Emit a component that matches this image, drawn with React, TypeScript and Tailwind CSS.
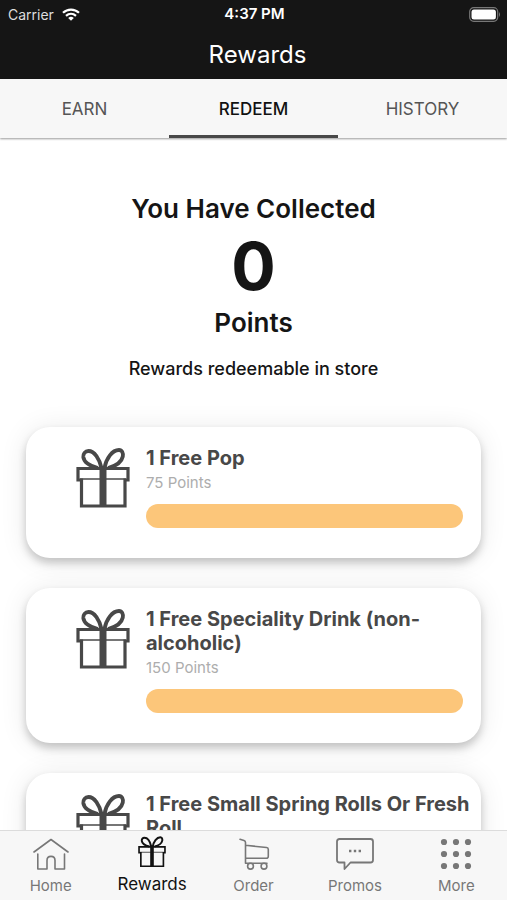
import type { ReactNode } from "react";

type IconProps = { className?: string };

function GiftIcon({ className }: IconProps) {
  return (
    <svg viewBox="0 0 54 61" className={className} fill="none" stroke="currentColor" aria-hidden="true">
      <path
        strokeWidth="3.8"
        d="M25.500 20C23.500 11 18.500 3 12.500 3C9 3 7 6 7.300 9C8 14.500 14 18 22 20M28.500 20C30 11 36 2 43 2C46 2 47.400 5 46.800 8.500C45.500 14.500 40 18 32 20"
      />
      <path strokeWidth="3.2" d="M2 31V20.500H52V32H49V58H5.500V32H2Z" />
      <path strokeWidth="1.400" d="M4 31H50" />
      <path strokeWidth="7" d="M27 18V59" />
    </svg>
  );
}

function HomeIcon({ className }: IconProps) {
  return (
    <svg viewBox="0 0 36 32" className={className} fill="none" stroke="currentColor" strokeWidth="1.600" strokeLinecap="round" strokeLinejoin="round" aria-hidden="true">
      <path d="M1 14L18 1.500L35 14M4.800 16V31H14V22.500C14 17 22 17 22 22.500V31H31.500V16" />
    </svg>
  );
}

function CartIcon({ className }: IconProps) {
  return (
    <svg viewBox="0 0 32 32" className={className} fill="none" stroke="currentColor" strokeWidth="1.600" strokeLinecap="round" strokeLinejoin="round" aria-hidden="true">
      <path d="M2 1.200L6 2.500Q7.500 3 7.500 4.500V25.200H29M7.500 7.300L28.500 9.500Q30.300 9.700 30.300 11.500V18.200Q30.300 20.200 28.300 20.200H7.500" />
      <circle cx="12.500" cy="28.200" r="2.900" />
      <circle cx="26" cy="28.200" r="2.900" />
    </svg>
  );
}

function ChatIcon({ className }: IconProps) {
  return (
    <svg viewBox="0 0 38 32" className={className} fill="none" stroke="currentColor" strokeWidth="1.800" strokeLinejoin="round" aria-hidden="true">
      <path d="M3.500 1H34.500Q37 1 37 3.500V22Q37 24.500 34.500 24.500H14.500L8.500 31V24.500H3.500Q1 24.500 1 22V3.500Q1 1 3.500 1Z" />
      <path strokeWidth="2.400" d="M13 13H15.400M17.800 13H20.200M22.600 13H25" />
    </svg>
  );
}

function GridIcon({ className }: IconProps) {
  return (
    <svg viewBox="0 0 32 32" className={className} fill="currentColor" aria-hidden="true">
      {[4, 16, 28].map((y) => [4, 16, 28].map((x) => <circle key={`${x}-${y}`} cx={x} cy={y} r="3.100" />))}
    </svg>
  );
}

function WifiIcon({ className }: IconProps) {
  return (
    <svg viewBox="0 0 18 13" className={className} fill="none" stroke="currentColor" strokeWidth="2.200" aria-hidden="true">
      <path d="M1 4.800C5.500 0.500 12.500 0.500 17 4.800M4 7.900C7 5.200 11 5.200 14 7.900" />
      <path fill="currentColor" stroke="none" d="M9 12.800L6.200 10Q9 7.700 11.800 10Z" />
    </svg>
  );
}

function BatteryIcon({ className }: IconProps) {
  return (
    <svg viewBox="0 0 32 15" className={className} fill="none" aria-hidden="true">
      <rect x="0.700" y="0.700" width="28" height="13.600" rx="4" stroke="#777" strokeWidth="1.200" />
      <rect x="2.500" y="2.500" width="24.400" height="10" rx="2.500" fill="#fff" />
      <path d="M30 5Q32 7.500 30 10Z" fill="#777" />
    </svg>
  );
}

function Tab({ label, active = false }: { label: string; active?: boolean }) {
  return (
    <button
      type="button"
      role="tab"
      aria-selected={active}
      className={`flex-1 border-b-[3px] pt-1.5 text-[17px] ${active ? "border-[#484848] font-medium text-[#111]" : "border-transparent text-[#555]"}`}
    >
      {label}
    </button>
  );
}

function RewardCard({ title, points }: { title: string; points: number }) {
  return (
    <li className="flex rounded-3xl bg-white pt-[19px] pr-1.5 pb-[30px] pl-[50px] shadow-[0_5px_8px_rgba(0,0,0,0.2),0_2px_28px_rgba(0,0,0,0.09)]">
      <GiftIcon className="mt-0.5 mr-4 h-[61px] w-[54px] shrink-0 text-[#484848]" />
      <div className="min-w-0 flex-1">
        <h2 className="text-xl leading-6 font-bold text-[#484848]">{title}</h2>
        <p className="text-[15px] leading-[26px] text-[#adadad]">{points} Points</p>
        <div className="mt-2 mr-3 h-6 rounded-full bg-[#fcc67a]" />
      </div>
    </li>
  );
}

function NavItem({ label, active = false, children }: { label: string; active?: boolean; children: ReactNode }) {
  return (
    <a
      href="#"
      aria-current={active ? "page" : undefined}
      className={`flex flex-1 flex-col items-center ${active ? "pt-[5px] text-[#111]" : "pt-[7px] text-[#777]"}`}
    >
      <span className="flex h-8 items-center">{children}</span>
      <span className={active ? "mt-1.5 text-[17px] leading-5" : "mt-1.5 text-[15px] leading-5"}>{label}</span>
    </a>
  );
}

const rewards = [
  { title: "1 Free Pop", points: 75 },
  { title: "1 Free Speciality Drink (non-alcoholic)", points: 150 },
  { title: "1 Free Small Spring Rolls Or Fresh Roll", points: 300 },
];

export default function App() {
  return (
    <div className="flex h-screen flex-col overflow-hidden bg-white font-[Inter,sans-serif]">
      <header className="shrink-0 bg-[#151515] pr-1.5 pl-2 text-white">
        <div className="grid h-7 grid-cols-3 items-center text-[14px]">
          <span className="flex items-center gap-2 text-[#ddd]">
            Carrier
            <WifiIcon className="h-[13px] w-[18px] text-white" />
          </span>
          <span className="text-center text-[15px] font-semibold">4:37 PM</span>
          <BatteryIcon className="h-[15px] w-8 justify-self-end" />
        </div>
        <h1 className="h-[51px] pt-3 pl-1.5 text-center text-[24px] leading-[30px]">Rewards</h1>
      </header>

      <div role="tablist" className="z-10 flex h-[59px] shrink-0 bg-[#f7f7f7] shadow-[0_1px_2px_rgba(0,0,0,0.4)]">
        <Tab label="EARN" />
        <Tab label="REDEEM" active />
        <Tab label="HISTORY" />
      </div>

      <main className="min-h-0 flex-1 overflow-hidden">
        <section className="flex flex-col items-center pt-[54px] text-center text-[#151515]">
          <p className="text-[26px] leading-[34px] font-semibold">You Have Collected</p>
          <p className="text-[66px] leading-[80px] font-bold">0</p>
          <p className="text-[26px] leading-[34px] font-semibold">Points</p>
          <p className="mt-[17px] text-[18px] leading-6 font-medium">Rewards redeemable in store</p>
        </section>
        <ul className="mt-[46px] flex flex-col gap-[30px] px-[26px]">
          {rewards.map((reward) => (
            <RewardCard key={reward.title} {...reward} />
          ))}
        </ul>
      </main>

      <nav className="z-10 flex h-[70px] shrink-0 border-t border-[#dcdcdc] bg-[#f7f7f7]">
        <NavItem label="Home">
          <HomeIcon className="h-8 w-9" />
        </NavItem>
        <NavItem label="Rewards" active>
          <GiftIcon className="h-8 w-7" />
        </NavItem>
        <NavItem label="Order">
          <CartIcon className="h-8 w-8" />
        </NavItem>
        <NavItem label="Promos">
          <ChatIcon className="h-8 w-[38px]" />
        </NavItem>
        <NavItem label="More">
          <GridIcon className="h-8 w-8" />
        </NavItem>
      </nav>
    </div>
  );
}
